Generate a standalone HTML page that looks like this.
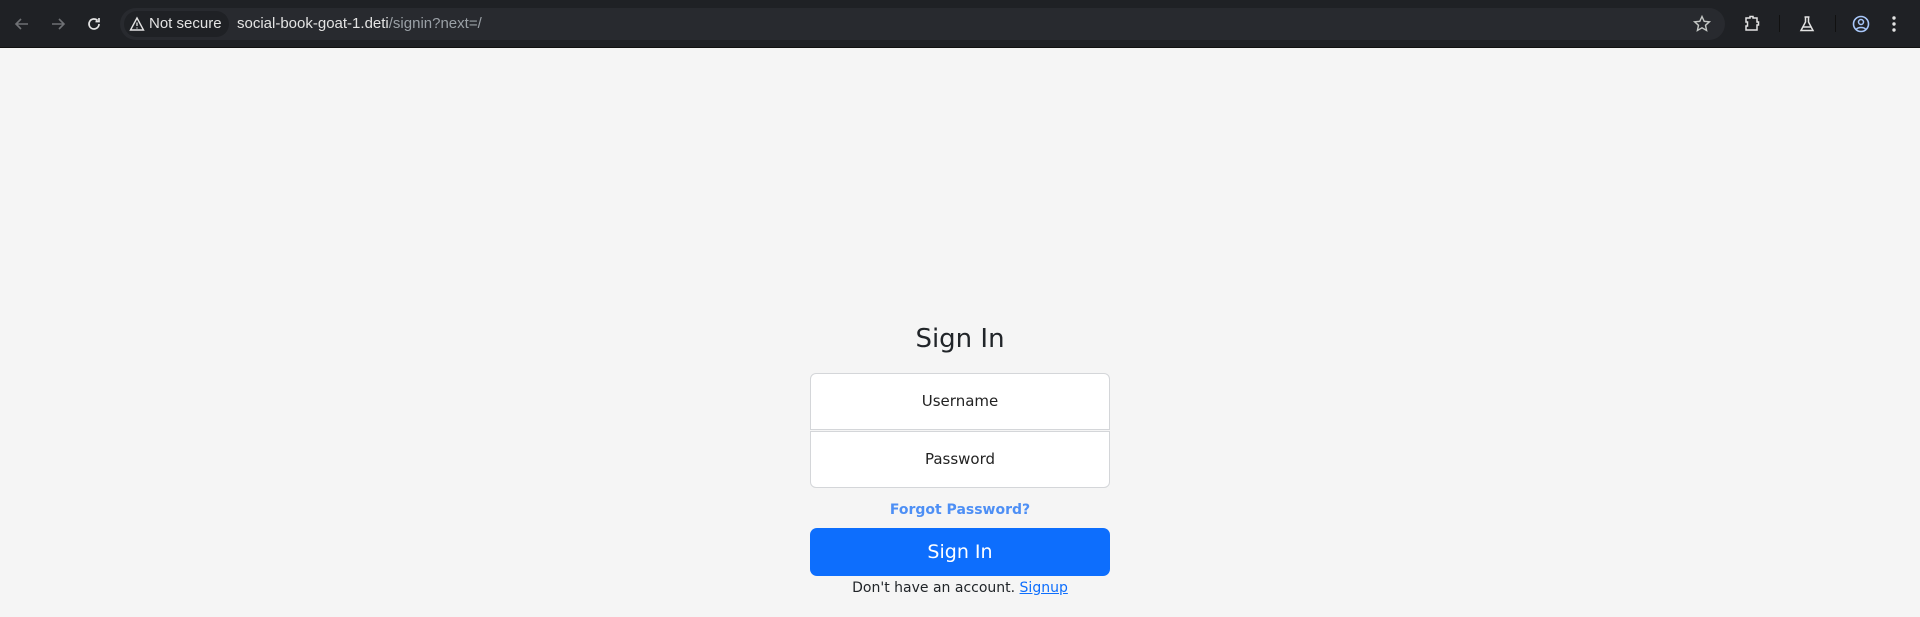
<!DOCTYPE html>
<html><head><style>
body{margin:0;width:1920px;height:617px;background:#f5f5f5;font-family:"DejaVu Sans","Liberation Sans",sans-serif;overflow:hidden;position:relative}
.bar{position:absolute;left:0;top:0;width:1920px;height:47px;background:#1f2125;border-bottom:1px solid #111}
.omni{position:absolute;left:120px;top:8px;width:1605px;height:32px;border-radius:16px;background:#282a2f}
.chip{position:absolute;left:124px;top:11px;height:26px;width:105px;border-radius:13px;background:#1f2125}
.t{position:absolute;color:#e3e3e3;font-size:15px;font-family:"Liberation Sans",sans-serif}
.abs{position:absolute}
.box{position:absolute;left:810px;width:300px;height:57px;background:#fff;border:1px solid #d4d6d9;text-align:center;line-height:55px;font-size:15px;color:#222;box-sizing:border-box}
</style></head><body>
<div class="bar"></div>
<div class="omni"></div>
<div class="chip"></div>
<svg class="abs" style="left:12px;top:14px" width="20" height="20" viewBox="0 0 20 20"><path d="M16 10H4M9 5l-5 5 5 5" stroke="#6f7175" stroke-width="1.6" fill="none"/></svg>
<svg class="abs" style="left:48px;top:14px" width="20" height="20" viewBox="0 0 20 20"><path d="M4 10h12M11 5l5 5-5 5" stroke="#6f7175" stroke-width="1.6" fill="none"/></svg>
<svg class="abs" style="left:84px;top:14px" width="20" height="20" viewBox="0 0 20 20"><path d="M15 10a5 5 0 1 1-1.5-3.6M15 4v3.5h-3.5" stroke="#e3e3e3" stroke-width="1.7" fill="none"/></svg>
<svg class="abs" style="left:129px;top:16px" width="16" height="16" viewBox="0 0 16 16"><path d="M8 2L1.5 14h13z" stroke="#e3e3e3" stroke-width="1.4" fill="none"/><path d="M8 6.5v3.5M8 11.5v1" stroke="#e3e3e3" stroke-width="1.3"/></svg>
<div class="t" style="left:149px;top:15px">Not secure</div>
<div class="t" style="left:237px;top:15px">social-book-goat-1.deti<span style="color:#9aa0a6">/signin?next=/</span></div>
<svg class="abs" style="left:1692px;top:14px" width="20" height="20" viewBox="0 0 20 20"><path d="M10 2.5l2.2 4.8 5.2.5-3.9 3.5 1.1 5.2L10 13.8l-4.6 2.7 1.1-5.2-3.9-3.5 5.2-.5z" stroke="#c4c7c5" stroke-width="1.4" fill="none"/></svg>
<svg class="abs" style="left:1742px;top:14px" width="20" height="20" viewBox="0 0 20 20"><path d="M4 4h4v-1.5h3V4h4v4h1.5v3H15v5H4v-4h1.5V8H4z" stroke="#e3e3e3" stroke-width="1.5" fill="none"/></svg>
<div class="abs" style="left:1779px;top:15px;width:1px;height:17px;background:#111"></div>
<svg class="abs" style="left:1797px;top:14px" width="20" height="20" viewBox="0 0 20 20"><path d="M7.5 3h5M8.5 3v5L4 16.5h12L11.5 8V3M6 13h8" stroke="#e3e3e3" stroke-width="1.5" fill="none"/></svg>
<div class="abs" style="left:1835px;top:15px;width:1px;height:17px;background:#111"></div>
<svg class="abs" style="left:1851px;top:14px" width="20" height="20" viewBox="0 0 20 20"><circle cx="10" cy="10" r="7.5" stroke="#a8c7fa" stroke-width="1.6" fill="none"/><circle cx="10" cy="8" r="2.5" stroke="#a8c7fa" stroke-width="1.5" fill="none"/><path d="M5.3 15.5c1.5-2.6 7.9-2.6 9.4 0" stroke="#a8c7fa" stroke-width="1.5" fill="none"/></svg>
<svg class="abs" style="left:1890px;top:14px" width="8" height="20" viewBox="0 0 8 20"><circle cx="4" cy="4" r="1.7" fill="#e3e3e3"/><circle cx="4" cy="10" r="1.7" fill="#e3e3e3"/><circle cx="4" cy="16" r="1.7" fill="#e3e3e3"/></svg>

<div class="abs" style="left:810px;width:300px;top:324px;text-align:center;font-size:26px;color:#212529">Sign In</div>
<div class="box" style="top:373px;border-radius:6px 6px 0 0">Username</div>
<div class="box" style="top:431px;border-radius:0 0 6px 6px">Password</div>
<div class="abs" style="left:810px;width:300px;top:502px;text-align:center;font-size:14px;font-weight:bold;color:#4d8ff5">Forgot Password?</div>
<div class="abs" style="left:810px;top:528px;width:300px;height:48px;background:#0d6efd;border-radius:7px;color:#fff;font-size:19px;text-align:center;line-height:48px">Sign In</div>
<div class="abs" style="left:810px;width:300px;top:580px;text-align:center;font-size:14px;color:#212529">Don't have an account. <span style="color:#0d6efd;text-decoration:underline">Signup</span></div>
</body></html>
